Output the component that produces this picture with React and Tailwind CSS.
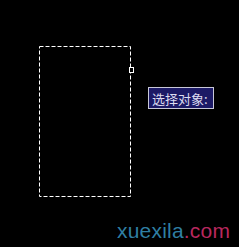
import React from 'react';

export default function App() {
  return (
    <div className="relative h-[247px] w-[239px] overflow-hidden bg-black">
      {/* selection window */}
      <svg className="absolute left-0 top-0" width="239" height="247">
        <rect
          x="39.5"
          y="46.5"
          width="91"
          height="150"
          fill="none"
          stroke="#fff"
          strokeWidth="1"
          strokeDasharray="4 2"
        />
        <rect x="129.5" y="67.5" width="4" height="5" fill="#000" stroke="#fff" strokeWidth="1" />
      </svg>

      <div className="absolute left-[148px] top-[87px] flex h-[22px] w-[66px] items-center border border-[#c8c8d8] bg-[#1c1a66] pl-[3px] font-['Noto_Sans_CJK_SC',sans-serif] text-[13px] leading-none text-[#dcdcf0]">
        选择对象:
      </div>

      <div className="absolute left-[117px] top-[220px] font-['Liberation_Sans',sans-serif] text-[21px] leading-none tracking-[0.2px]">
        <span className="text-[#2f7fa3]">xuexila</span>
        <span className="text-[#b8285e]">.com</span>
      </div>
    </div>
  );
}
